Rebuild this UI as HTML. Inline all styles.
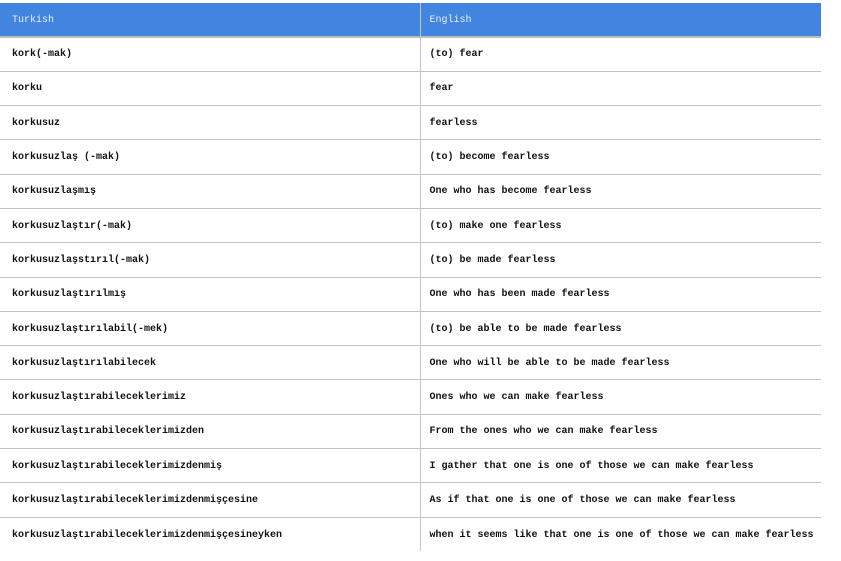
<!DOCTYPE html>
<html><head><meta charset="utf-8"><style>
body{margin:0;background:#fff;width:841px;height:561px;overflow:hidden}
table{position:absolute;left:0;top:3px;width:821px;border-collapse:collapse;font-family:"Liberation Mono",monospace;font-size:10px}
td,th{height:34.3px;padding:1px 0 0 12px;text-align:left;vertical-align:middle;box-sizing:border-box;border-bottom:1px solid #c4c4c4}
td:first-child,th:first-child{width:420px;border-right:1px solid #c4c4c4}
td:last-child,th:last-child{padding-left:9px}
th{background:#4285e0;color:#e8f0ff;font-weight:normal;height:34px;border-bottom:2px solid #bbb}
td{font-weight:bold;color:#111}
tr:last-child td{border-bottom:none}
</style></head><body>
<table>
<tr><th>Turkish</th><th>English</th></tr>
<tr><td>kork(-mak)</td><td>(to) fear</td></tr>
<tr><td>korku</td><td>fear</td></tr>
<tr><td>korkusuz</td><td>fearless</td></tr>
<tr><td>korkusuzlaş (-mak)</td><td>(to) become fearless</td></tr>
<tr><td>korkusuzlaşmış</td><td>One who has become fearless</td></tr>
<tr><td>korkusuzlaştır(-mak)</td><td>(to) make one fearless</td></tr>
<tr><td>korkusuzlaşstırıl(-mak)</td><td>(to) be made fearless</td></tr>
<tr><td>korkusuzlaştırılmış</td><td>One who has been made fearless</td></tr>
<tr><td>korkusuzlaştırılabil(-mek)</td><td>(to) be able to be made fearless</td></tr>
<tr><td>korkusuzlaştırılabilecek</td><td>One who will be able to be made fearless</td></tr>
<tr><td>korkusuzlaştırabileceklerimiz</td><td>Ones who we can make fearless</td></tr>
<tr><td>korkusuzlaştırabileceklerimizden</td><td>From the ones who we can make fearless</td></tr>
<tr><td>korkusuzlaştırabileceklerimizdenmiş</td><td>I gather that one is one of those we can make fearless</td></tr>
<tr><td>korkusuzlaştırabileceklerimizdenmişçesine</td><td>As if that one is one of those we can make fearless</td></tr>
<tr><td>korkusuzlaştırabileceklerimizdenmişçesineyken</td><td>when it seems like that one is one of those we can make fearless</td></tr>
</table>
</body></html>
